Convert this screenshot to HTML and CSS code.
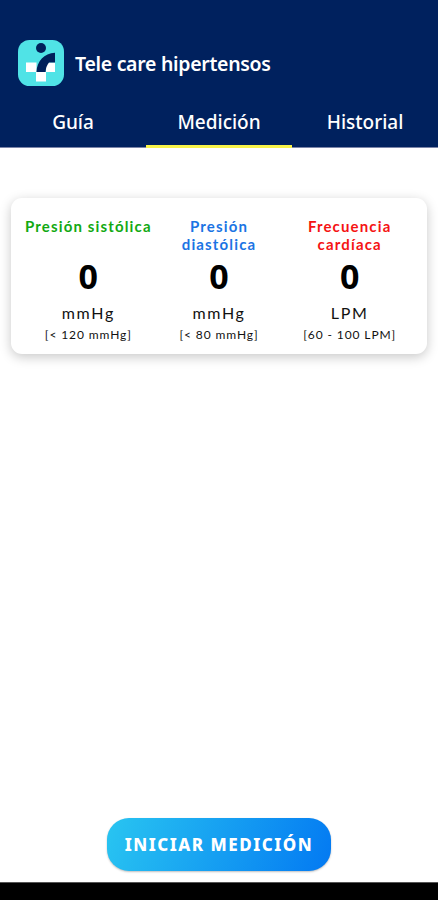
FILE: index.html
```
<!DOCTYPE html>
<html lang="es">

<head>
    <meta charset="UTF-8">
    <meta name="viewport" content="width=device-width, initial-scale=1.0">
    <title>Tele care hipertensos</title>
    <link rel="stylesheet" href="styles.css">
</head>

<body>
    <header>
        <div class="brand">
            <svg class="logo" viewBox="0 0 46 46">
                <rect width="46" height="46" rx="11.5" fill="#50e3e6" />
                <rect x="8" y="22.5" width="10.5" height="9.5" fill="#fff" />
                <rect x="28" y="22.5" width="9" height="9.5" fill="#fff" />
                <rect x="18" y="32" width="10" height="9.5" fill="#fff" />
                <circle cx="23" cy="8" r="5" fill="#00205b" />
                <path d="M37 12.7V22.5H31Q28 26 27.5 32H18.5C19 21 26 13.5 37 12.7Z" fill="#00205b" />
            </svg>
            <h1>Tele care hipertensos</h1>
        </div>
        <nav class="tabs">
            <a>Guía</a>
            <a class="current">Medición</a>
            <a>Historial</a>
        </nav>
    </header>

    <main>
        <section class="card">
            <div class="item">
                <h2 class="green">Presión sistólica</h2>
                <p class="value">0</p>
                <p class="unit">mmHg</p>
                <p class="range">[&lt; 120 mmHg]</p>
            </div>
            <div class="item">
                <h2 class="blue">Presión<br>diastólica</h2>
                <p class="value">0</p>
                <p class="unit">mmHg</p>
                <p class="range">[&lt; 80 mmHg]</p>
            </div>
            <div class="item">
                <h2 class="red">Frecuencia<br>cardíaca</h2>
                <p class="value">0</p>
                <p class="unit">LPM</p>
                <p class="range">[60 - 100 LPM]</p>
            </div>
        </section>
        <button class="start">INICIAR MEDICIÓN</button>
    </main>

    <footer></footer>
</body>

</html>
```
FILE: styles.css
```
* {
    margin: 0;
    padding: 0;
    box-sizing: border-box;
}

body {
    display: flex;
    flex-direction: column;
    height: 900px;
    background-color: #fff;
    font-family: "Noto Sans", sans-serif;
    overflow: hidden;
}

header {
    height: 148px;
    padding-top: 40px;
    background-color: #00215e;
    color: #fff;
    border-bottom: 1px solid #7b84a8;
}

.brand {
    display: flex;
    align-items: center;
    gap: 11px;
    height: 46px;
    padding-left: 18px;
}

.logo {
    width: 46px;
    height: 46px;
}

h1 {
    font-size: 19.5px;
    font-weight: 600;
    letter-spacing: -0.3px;
    white-space: nowrap;
}

.tabs {
    display: flex;
    height: 62px;
}

.tabs a {
    flex: 1;
    height: 62px;
    padding-top: 11px;
    font-size: 19px;
    font-weight: 500;
    line-height: 50px;
    text-align: center;
    border-bottom: 3px solid transparent;
}

.tabs .current {
    border-bottom-color: #f8f34a;
}

main {
    flex: 1;
    display: flex;
    flex-direction: column;
    align-items: center;
    justify-content: space-between;
    padding: 50px 11px 11px;
}

.card {
    display: flex;
    width: 416px;
    height: 156px;
    padding: 19px 12px 0;
    border-radius: 11px;
    background-color: #fff;
    box-shadow: 0 3px 12px rgba(0, 0, 0, .22);
}

.item {
    flex: 1;
    font-family: Lato, sans-serif;
    color: #111;
    text-align: center;
    white-space: nowrap;
}

h2 {
    height: 38px;
    font-size: 15px;
    font-weight: 700;
    line-height: 18px;
    letter-spacing: 1.15px;
}

.green {
    color: #12a912;
}

.blue {
    color: #1b74e4;
}

.red {
    color: #f51414;
}

.value {
    height: 47px;
    font-family: "Noto Sans", sans-serif;
    font-size: 34px;
    font-weight: 700;
    line-height: 42px;
    color: #000;
}

.unit {
    font-size: 16px;
    line-height: 22px;
    letter-spacing: 1.7px;
}

.range {
    font-size: 12px;
    line-height: 22px;
    letter-spacing: 0.9px;
}

.start {
    width: 224px;
    height: 53px;
    border: none;
    border-radius: 22px;
    background-image: linear-gradient(110deg, #29c5f1, #0379f2);
    box-shadow: 0 1px 2px rgba(0, 0, 0, .25);
    color: #fff;
    font-family: "Noto Sans", sans-serif;
    font-size: 17px;
    font-weight: 800;
    letter-spacing: 1.5px;
    white-space: nowrap;
}

footer {
    height: 18px;
    background-color: #000;
    border-top: 1px solid #555;
}
```
